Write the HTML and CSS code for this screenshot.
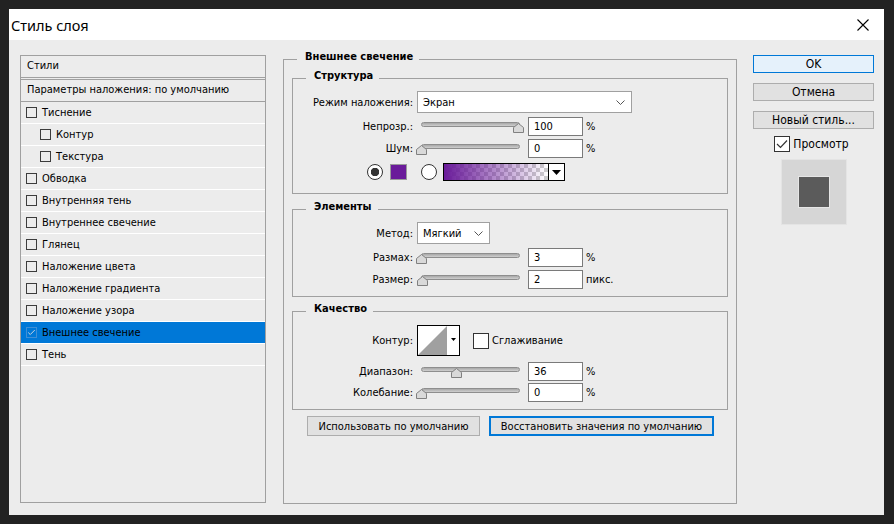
FILE: index.html
```html
<!DOCTYPE html>
<html lang="ru">
<head>
    <meta charset="UTF-8">
    <link rel="stylesheet" href="styles.css">
    <title>Стиль слоя</title>
</head>
<body>
<div class="dialog">
    <div class="titlebar">
        <span class="title">Стиль слоя</span>
        <svg class="close" width="12" height="12" viewBox="0 0 12 12">
            <path d="M0.5 0.5 L11.5 11.5 M11.5 0.5 L0.5 11.5" stroke="#000" stroke-width="1.1" fill="none"/>
        </svg>
    </div>

    <div class="content">
        <!-- list of effects -->
        <div class="styles">
            <div class="list-head">Стили</div>
            <div class="list-params">Параметры наложения: по умолчанию</div>
            <div class="item"><span class="cb"></span>Тиснение</div>
            <div class="item sub"><span class="cb"></span>Контур</div>
            <div class="item sub"><span class="cb"></span>Текстура</div>
            <div class="item"><span class="cb"></span>Обводка</div>
            <div class="item"><span class="cb"></span>Внутренняя тень</div>
            <div class="item"><span class="cb"></span>Внутреннее свечение</div>
            <div class="item"><span class="cb"></span>Глянец</div>
            <div class="item"><span class="cb"></span>Наложение цвета</div>
            <div class="item"><span class="cb"></span>Наложение градиента</div>
            <div class="item"><span class="cb"></span>Наложение узора</div>
            <div class="item selected"><span class="cb on"><svg width="11" height="11" viewBox="0 0 11 11"><path d="M1.5 5.5 L4 8 L9.5 2.5" stroke="#c9d3de" stroke-width="1.2" fill="none"/></svg></span>Внешнее свечение</div>
            <div class="item"><span class="cb"></span>Тень</div>
        </div>

        <!-- settings -->
        <div class="main">
            <div class="legend legend-main">Внешнее свечение</div>

            <div class="group group-struct">
                <div class="legend">Структура</div>
                <div class="row row-select">
                    <span class="label">Режим наложения:</span>
                    <div class="select select-wide">
                        <span>Экран</span>
                        <svg width="9" height="5" viewBox="0 0 9 5"><path d="M0.5 0.5 L4.5 4.5 L8.5 0.5" stroke="#555" fill="none"/></svg>
                    </div>
                </div>
                <div class="row">
                    <span class="label">Непрозр.:</span>
                    <div class="slider"><div class="track"><svg class="thumb" style="left: 100%" width="11" height="10" viewBox="0 0 11 10"><polygon points="0.5,4.5 5.5,0.5 10.5,4.5 10.5,9.5 0.5,9.5" fill="#d9d9d9" stroke="#808080"/></svg></div></div>
                    <div class="field">100</div>
                    <span class="unit">%</span>
                </div>
                <div class="row">
                    <span class="label">Шум:</span>
                    <div class="slider"><div class="track"><svg class="thumb" style="left: 0%" width="11" height="10" viewBox="0 0 11 10"><polygon points="0.5,4.5 5.5,0.5 10.5,4.5 10.5,9.5 0.5,9.5" fill="#d9d9d9" stroke="#808080"/></svg></div></div>
                    <div class="field">0</div>
                    <span class="unit">%</span>
                </div>
                <div class="color-row">
                    <span class="radio on"></span>
                    <span class="swatch"></span>
                    <span class="radio"></span>
                    <div class="gradient">
                        <div class="gradient-fill"></div>
                        <div class="gradient-arrow">
                            <svg width="9" height="5" viewBox="0 0 9 5"><polygon points="0,0 9,0 4.5,5" fill="#000"/></svg>
                        </div>
                    </div>
                </div>
            </div>

            <div class="group group-elem">
                <div class="legend">Элементы</div>
                <div class="row row-select">
                    <span class="label">Метод:</span>
                    <div class="select select-small">
                        <span>Мягкий</span>
                        <svg width="9" height="5" viewBox="0 0 9 5"><path d="M0.5 0.5 L4.5 4.5 L8.5 0.5" stroke="#555" fill="none"/></svg>
                    </div>
                </div>
                <div class="row">
                    <span class="label">Размах:</span>
                    <div class="slider"><div class="track"><svg class="thumb" style="left: 0%" width="11" height="10" viewBox="0 0 11 10"><polygon points="0.5,4.5 5.5,0.5 10.5,4.5 10.5,9.5 0.5,9.5" fill="#d9d9d9" stroke="#808080"/></svg></div></div>
                    <div class="field">3</div>
                    <span class="unit">%</span>
                </div>
                <div class="row">
                    <span class="label">Размер:</span>
                    <div class="slider"><div class="track"><svg class="thumb" style="left: 1%" width="11" height="10" viewBox="0 0 11 10"><polygon points="0.5,4.5 5.5,0.5 10.5,4.5 10.5,9.5 0.5,9.5" fill="#d9d9d9" stroke="#808080"/></svg></div></div>
                    <div class="field">2</div>
                    <span class="unit">пикс.</span>
                </div>
            </div>

            <div class="group group-quality">
                <div class="legend">Качество</div>
                <div class="row row-contour">
                    <span class="label">Контур:</span>
                    <div class="contour">
                        <svg width="29" height="29" viewBox="0 0 29 29"><polygon points="0,29 29,0 29,29" fill="#a0a0a0"/></svg>
                        <div class="contour-arrow">
                            <svg width="5" height="3" viewBox="0 0 5 3"><polygon points="0,0 5,0 2.5,3" fill="#000"/></svg>
                        </div>
                    </div>
                    <span class="box"></span>
                    <span class="box-label">Сглаживание</span>
                </div>
                <div class="row row-tight">
                    <span class="label">Диапазон:</span>
                    <div class="slider"><div class="track"><svg class="thumb" style="left: 36%" width="11" height="10" viewBox="0 0 11 10"><polygon points="0.5,4.5 5.5,0.5 10.5,4.5 10.5,9.5 0.5,9.5" fill="#d9d9d9" stroke="#808080"/></svg></div></div>
                    <div class="field">36</div>
                    <span class="unit">%</span>
                </div>
                <div class="row row-tight">
                    <span class="label">Колебание:</span>
                    <div class="slider"><div class="track"><svg class="thumb" style="left: 0%" width="11" height="10" viewBox="0 0 11 10"><polygon points="0.5,4.5 5.5,0.5 10.5,4.5 10.5,9.5 0.5,9.5" fill="#d9d9d9" stroke="#808080"/></svg></div></div>
                    <div class="field">0</div>
                    <span class="unit">%</span>
                </div>
            </div>

            <div class="defaults">
                <button class="btn btn-use">Использовать по умолчанию</button>
                <button class="btn btn-restore">Восстановить значения по умолчанию</button>
            </div>
        </div>

        <!-- dialog buttons -->
        <div class="side">
            <button class="btn side-btn btn-ok">OK</button>
            <button class="btn side-btn">Отмена</button>
            <button class="btn side-btn">Новый стиль...</button>
            <div class="preview-check">
                <span class="box checked"><svg width="14" height="14" viewBox="0 0 14 14"><path d="M2 7 L5.5 10.5 L12 3.5" stroke="#333" stroke-width="1.2" fill="none"/></svg></span>
                <span>Просмотр</span>
            </div>
            <div class="preview"><div class="preview-inner"></div></div>
        </div>
    </div>
</div>
</body>
</html>
```

FILE: styles.css
```css
body {
    margin: 0;
    background-color: #222222;
    font-family: "DejaVu Sans Condensed", "Liberation Sans", sans-serif;
    font-size: 11px;
    color: #000;
}

.dialog {
    margin: 9px 10px 9px 9px;
    width: 875px;
    height: 506px;
    background: #ececec;
    display: flex;
    flex-direction: column;
}

.titlebar {
    height: 31px;
    background: #fff;
    display: flex;
    align-items: center;
    justify-content: space-between;
    padding: 0 15px 0 2px;
}

.title {
    font-family: "Noto Sans", sans-serif;
    font-size: 14.5px;
}

.content {
    display: flex;
    align-items: flex-start;
    padding: 15px 0 0 11px;
}

/* effects list */
.styles {
    width: 244px;
    height: 446px;
    border: 1px solid #a0a0a0;
}

.list-head {
    height: 21px;
    line-height: 20px;
    padding-left: 6px;
    border-bottom: 1px solid #a0a0a0;
    margin-bottom: 1px;
}

.list-params {
    height: 21px;
    line-height: 20px;
    padding-left: 6px;
    border-top: 1px solid #a0a0a0;
    border-bottom: 1px solid #a0a0a0;
}

.item {
    height: 21px;
    display: flex;
    align-items: center;
    padding-left: 5px;
    border-bottom: 1px solid #fff;
}

.item.sub {
    padding-left: 19px;
}

.item.selected {
    background: #0078d7;
}

.cb {
    width: 11px;
    height: 11px;
    border: 1px solid #3c3c3c;
    margin-right: 5px;
    box-sizing: border-box;
    display: flex;
    align-items: center;
    justify-content: center;
}

.cb.on {
    border-color: #3f8fd6;
}

/* main group */
.main {
    margin-left: 17px;
    margin-top: 4px;
    width: 436px;
    height: 443px;
    padding: 0 8px;
    border: 1px solid #a0a0a0;
}

.legend {
    width: fit-content;
    height: 14px;
    line-height: 14px;
    margin: -10px 0 0 13px;
    padding: 0 6px 0 8px;
    background: #ececec;
    font-weight: bold;
}

.legend-main {
    margin-left: 5px;
}

.group {
    border: 1px solid #a0a0a0;
    margin-top: 14px;
}

.group-struct {
    height: 114px;
}

.group-elem {
    margin-top: 15px;
    height: 86px;
}

.group-quality {
    margin-top: 14px;
    height: 97px;
}

.row {
    display: flex;
    align-items: center;
    height: 22px;
}

.row-select {
    margin-top: 8px;
    margin-bottom: 2px;
}

.row-tight {
    height: 21px;
}

.label {
    width: 120px;
    text-align: right;
    margin-right: 4px;
}

.select {
    height: 22px;
    box-sizing: border-box;
    border: 1px solid #a0a0a0;
    background: #fff;
    display: flex;
    align-items: center;
    justify-content: space-between;
    padding: 0 6px 0 5px;
}

.select-wide {
    width: 215px;
}

.select-small {
    width: 73px;
}

.slider {
    width: 107px;
    height: 19px;
}

.track {
    position: relative;
    margin: 5px 4px 0;
    height: 5px;
    box-sizing: border-box;
    border: 1px solid #8e8e8e;
    border-radius: 3px;
    background: linear-gradient(#a8a8a8, #cfcfcf);
}

.thumb {
    position: absolute;
    top: 0;
    margin-left: -6px;
}

.field {
    width: 55px;
    height: 19px;
    box-sizing: border-box;
    border: 1px solid #7a7a7a;
    background: #fff;
    line-height: 17px;
    padding-left: 5px;
    margin-left: 4px;
}

.unit {
    margin-left: 3px;
}

.color-row {
    display: flex;
    align-items: center;
    margin-top: 4px;
    padding-left: 74px;
}

.radio {
    width: 16px;
    height: 16px;
    box-sizing: border-box;
    border: 1px solid #333;
    border-radius: 50%;
    background: #fff;
}

.radio.on {
    background: radial-gradient(circle, #333 0 4px, #fff 4.5px);
}

.swatch {
    width: 17px;
    height: 16px;
    box-sizing: border-box;
    border: 1px solid #9a9a9a;
    background: #6a1b9a;
    margin: 0 14px 0 7px;
}

.gradient {
    width: 122px;
    height: 18px;
    margin-left: 6px;
    box-sizing: border-box;
    border: 1px solid #000;
    display: flex;
}

.gradient-fill {
    flex: 1;
    border-right: 1px solid #000;
    background:
        linear-gradient(to right, #6a1b9a, rgba(106, 27, 154, 0)),
        conic-gradient(#fff 25%, #cdcdcd 0 50%, #fff 0 75%, #cdcdcd 0) 0 0 / 8px 8px;
}

.gradient-arrow {
    width: 15px;
    background: #fff;
    display: flex;
    align-items: center;
    justify-content: center;
}

.row-contour {
    height: 31px;
    margin-top: 9px;
    margin-bottom: 5px;
}

.contour {
    width: 43px;
    height: 31px;
    box-sizing: border-box;
    border: 1px solid #000;
    background: #fff;
    display: flex;
}

.contour svg {
    display: block;
}

.contour-arrow {
    flex: 1;
    display: flex;
    align-items: center;
    justify-content: center;
    padding-bottom: 2px;
}

.box {
    width: 16px;
    height: 16px;
    box-sizing: border-box;
    border: 1px solid #333;
    background: #fff;
    margin-left: 13px;
    margin-right: 3px;
    display: flex;
    align-items: center;
    justify-content: center;
}

.defaults {
    display: flex;
    margin-top: 6px;
    padding-left: 15px;
}

.btn {
    font-family: inherit;
    font-size: 11px;
    color: #000;
    background: #e1e1e1;
    border: 1px solid #adadad;
    padding: 0;
    height: 20px;
}

.btn-use {
    width: 173px;
}

.btn-restore {
    width: 225px;
    margin-left: 9px;
    border: 2px solid #0078d7;
}

/* right column */
.side {
    margin-left: 16px;
    width: 121px;
    display: flex;
    flex-direction: column;
    align-items: center;
}

.side-btn {
    width: 121px;
    height: 18px;
    margin-bottom: 10px;
    font-size: 12px;
    line-height: 16px;
}

.btn-ok {
    background: #e5f1fb;
    border-color: #0078d7;
}

.preview-check {
    display: flex;
    align-items: center;
    font-size: 12px;
    margin-top: -3px;
    margin-right: 4px;
}

.preview-check .box {
    margin: 0 3px 0 0;
}

.preview {
    margin-top: 7px;
    width: 66px;
    height: 66px;
    box-sizing: border-box;
    border: 1px solid #e4e4e4;
    background: #d6d6d6;
    display: flex;
    align-items: center;
    justify-content: center;
}

.preview-inner {
    width: 32px;
    height: 32px;
    box-sizing: border-box;
    border: 1px solid #e6e6e6;
    background: #5b5b5b;
}
```
